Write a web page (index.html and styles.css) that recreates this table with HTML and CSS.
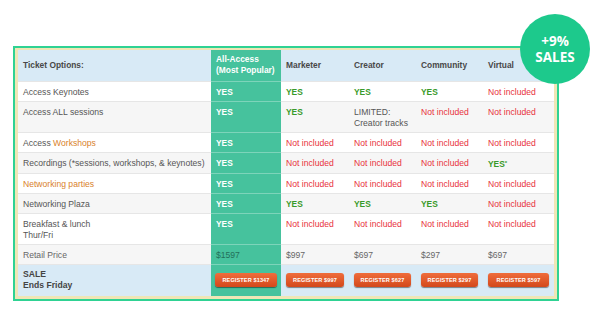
FILE: index.html
```html
<!DOCTYPE html>
<html lang="en">
  <head>
    <meta charset="UTF-8" />
    <title>Ticket Options</title>
    <link rel="stylesheet" href="styles.css">
  </head>
  <body>
    <div class="stage">
      <div class="frame">
        <table class="tickets">
          <colgroup>
            <col class="tickets__col-label" />
            <col class="tickets__col-all" />
            <col class="tickets__col-marketer" />
            <col class="tickets__col-creator" />
            <col class="tickets__col-community" />
            <col class="tickets__col-virtual" />
          </colgroup>
          <thead>
            <tr class="tickets__head">
              <th>Ticket Options:</th>
              <th class="is-all">All-Access<br />(Most Popular)</th>
              <th>Marketer</th>
              <th>Creator</th>
              <th>Community</th>
              <th>Virtual</th>
            </tr>
          </thead>
          <tbody>
            <tr>
              <td>Access Keynotes</td>
              <td class="is-all yes">YES</td>
              <td class="yes">YES</td>
              <td class="yes">YES</td>
              <td class="yes">YES</td>
              <td class="no">Not included</td>
            </tr>
            <tr>
              <td>Access ALL sessions</td>
              <td class="is-all yes">YES</td>
              <td class="yes">YES</td>
              <td>LIMITED:<br />Creator tracks</td>
              <td class="no">Not included</td>
              <td class="no">Not included</td>
            </tr>
            <tr>
              <td>Access <span class="accent">Workshops</span></td>
              <td class="is-all yes">YES</td>
              <td class="no">Not included</td>
              <td class="no">Not included</td>
              <td class="no">Not included</td>
              <td class="no">Not included</td>
            </tr>
            <tr>
              <td>Recordings (*sessions, workshops, &amp; keynotes)</td>
              <td class="is-all yes">YES</td>
              <td class="no">Not included</td>
              <td class="no">Not included</td>
              <td class="no">Not included</td>
              <td class="yes">YES<sup>*</sup></td>
            </tr>
            <tr>
              <td><span class="accent">Networking parties</span></td>
              <td class="is-all yes">YES</td>
              <td class="no">Not included</td>
              <td class="no">Not included</td>
              <td class="no">Not included</td>
              <td class="no">Not included</td>
            </tr>
            <tr>
              <td>Networking Plaza</td>
              <td class="is-all yes">YES</td>
              <td class="yes">YES</td>
              <td class="yes">YES</td>
              <td class="yes">YES</td>
              <td class="no">Not included</td>
            </tr>
            <tr>
              <td>Breakfast &amp; lunch<br />Thur/Fri</td>
              <td class="is-all yes">YES</td>
              <td class="no">Not included</td>
              <td class="no">Not included</td>
              <td class="no">Not included</td>
              <td class="no">Not included</td>
            </tr>
            <tr class="tickets__price">
              <td>Retail Price</td>
              <td class="is-all">$1597</td>
              <td>$997</td>
              <td>$697</td>
              <td>$297</td>
              <td>$697</td>
            </tr>
            <tr class="tickets__sale">
              <td><strong>SALE<br />Ends Friday</strong></td>
              <td class="is-all"><a class="btn" href="#">Register $1347</a></td>
              <td><a class="btn" href="#">Register $997</a></td>
              <td><a class="btn" href="#">Register $627</a></td>
              <td><a class="btn" href="#">Register $297</a></td>
              <td><a class="btn" href="#">Register $597</a></td>
            </tr>
          </tbody>
        </table>
      </div>

      <div class="badge">
        <span>+9%</span>
        <span>SALES</span>
      </div>
    </div>
  </body>
</html>
```

FILE: styles.css
```css
* {
  box-sizing: border-box;
  margin: 0;
  padding: 0;
}
body {
  background: #fff;
  font-family: "Liberation Sans", Arial, sans-serif;
  color: #555;
  -webkit-font-smoothing: antialiased;
}
.stage {
  position: relative;
  width: 600px;
  height: 315px;
  padding: 46px 0 0 13px;
}
.frame {
  width: 546px;
  border: 2px solid #2fd293;
  background: #efe6b6;
  padding: 2px 3px 3px;
}
.tickets {
  width: 536px;
  table-layout: fixed;
  border-collapse: collapse;
  font-size: 8.6px;
  line-height: 11px;
}
.tickets__col-label { width: 193px; }
.tickets__col-all { width: 70px; }
.tickets__col-marketer { width: 68px; }
.tickets__col-creator { width: 67px; }
.tickets__col-community { width: 67px; }
.tickets__col-virtual { width: 71px; }

.tickets th,
.tickets td {
  text-align: left;
  vertical-align: top;
  padding: 5px 4px 3px 5px;
  border-top: 1px solid #e6e6e6;
}
.tickets tbody tr:nth-child(odd) { background: #fff; }
.tickets tbody tr:nth-child(even) { background: #f6f6f6; }

.tickets__head th {
  height: 31px;
  padding-top: 4px;
  padding-bottom: 4px;
  vertical-align: middle;
  background: #d8eaf6;
  border-top: 0;
  font-size: 8.4px;
  font-weight: 700;
  color: #484848;
}
.tickets .is-all {
  background: #46c29d;
  color: #fff;
  border-top-color: rgba(255, 255, 255, 0.3);
}
.yes {
  font-size: 8.4px;
  font-weight: 700;
  color: #3a9a2a;
}
.yes sup {
  font-size: 6px;
  vertical-align: 2px;
}
.no {
  color: #e8323c;
}
.accent {
  color: #d9822b;
}
.tickets__price td {
  color: #666;
}
.tickets .tickets__price .is-all {
  color: #23705a;
}
.tickets__sale td {
  height: 32px;
  vertical-align: middle;
  background: #d8eaf6;
  padding: 0 5px;
}
.tickets .tickets__sale .is-all {
  background: #46c29d;
  padding: 0 4px;
}
.tickets__sale strong {
  display: block;
  color: #444;
  font-size: 8.6px;
}
.btn {
  display: block;
  height: 14px;
  border-radius: 3px;
  background: linear-gradient(180deg, #ef6d3c 0%, #d3481b 100%);
  box-shadow: 0 1px 1px rgba(0, 0, 0, 0.45);
  color: #fff;
  font-size: 5.6px;
  font-weight: 700;
  line-height: 14px;
  text-align: center;
  text-transform: uppercase;
  text-decoration: none;
  letter-spacing: 0.1px;
}
.badge {
  position: absolute;
  left: 520px;
  top: 14px;
  width: 70px;
  height: 70px;
  border-radius: 50%;
  background: #1dc98c;
  display: flex;
  flex-direction: column;
  align-items: center;
  justify-content: center;
  color: #fff;
  font-family: "Open Sans", sans-serif;
  font-size: 13.5px;
  font-weight: 700;
  line-height: 16px;
}
.badge span {
  display: block;
  height: 16px;
  overflow: hidden;
}
```
